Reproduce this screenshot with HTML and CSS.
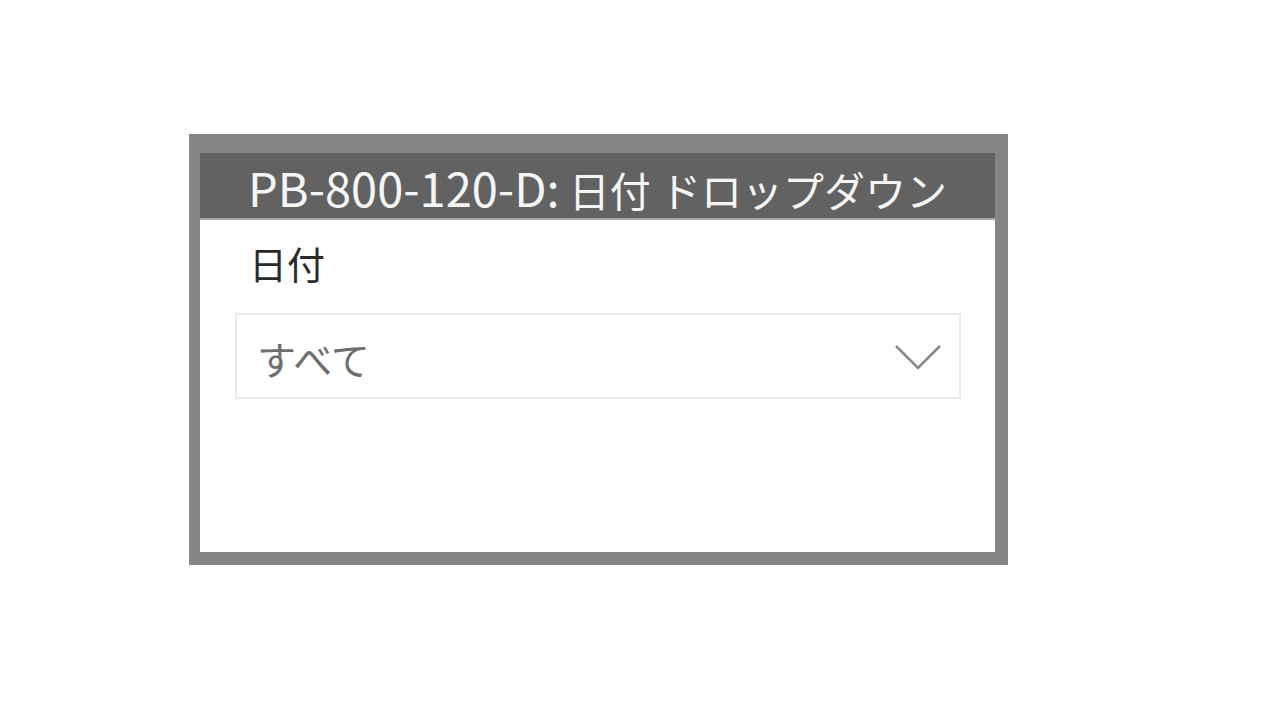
FILE: index.html
```html
<!DOCTYPE html>
<html lang="ja">
<head>
<meta charset="utf-8">
<title>PB-800-120-D: 日付 ドロップダウン</title>
<link rel="stylesheet" href="styles.css">
</head>
<body>
<div class="frame">
  <div class="panel">
    <div class="header"><span class="latin">PB-800-120-D:</span> 日付 ドロップダウン</div>
    <div class="label">日付</div>
    <div class="dropdown">
      <span class="value">すべて</span>
      <svg class="chevron" width="48" height="27" viewBox="0 0 48 27">
        <polyline points="2,2 24,24 46,2" fill="none" stroke="#8a8a8a" stroke-width="2.6" stroke-linejoin="miter"/>
      </svg>
    </div>
  </div>
</div>
</body>
</html>
```

FILE: styles.css
```css
html, body {
  margin: 0;
  padding: 0;
  background: #ffffff;
}
body {
  font-family: "Noto Sans CJK JP", "Noto Sans", sans-serif;
}
.frame {
  box-sizing: border-box;
  margin-left: 189px;
  margin-top: 134px;
  width: 819px;
  height: 431px;
  background: #858585;
  padding: 19px 13px 13px 11px;
}
.panel {
  height: 100%;
  background: #ffffff;
  display: flex;
  flex-direction: column;
}
.header {
  background: #626262;
  border-bottom: 2px solid #a8a8a8;
  color: #f5f5f5;
  font-size: 41px;
  text-align: center;
  white-space: nowrap;
  padding-top: 3px;
  height: 62px;
  line-height: 62px;
}
.latin {
  font-size: 47px;
}
.label {
  margin: 23px 0 0 49px;
  font-size: 38px;
  line-height: 40px;
  color: #2a2a2a;
}
.dropdown {
  box-sizing: border-box;
  margin: 30px 0 0 35px;
  width: 726px;
  height: 86px;
  border: 2px solid #e8e8e8;
  display: flex;
  align-items: center;
  justify-content: space-between;
  padding: 4px 17px 0 20px;
}
.value {
  font-size: 39px;
  line-height: 44px;
  color: #6e6e6e;
}
.chevron {
  display: block;
  margin-top: -2px;
}
```
